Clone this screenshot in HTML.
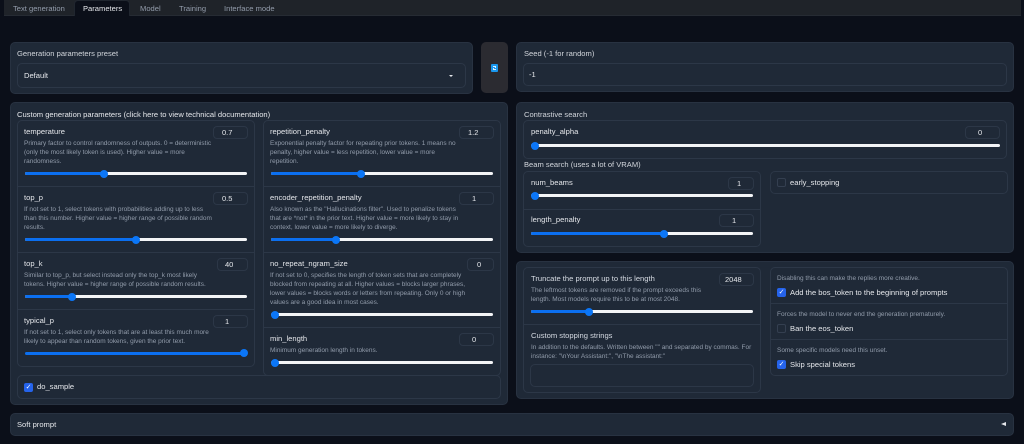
<!DOCTYPE html>
<html><head><meta charset="utf-8"><style>
html{background:#0b0f19}
html,body{margin:0;padding:0;width:1024px;height:444px;overflow:hidden;font-family:"Liberation Sans",sans-serif}
#r{position:absolute;left:0;top:0;width:1024px;height:444px;background:#0b0f19;filter:blur(.35px);overflow:hidden}
#r div{position:absolute;box-sizing:border-box}
#r svg{position:absolute}
#r .p{background:#1f2937;border:1px solid #283241;border-radius:5px}
#r .b{border:1px solid #2c3747;border-radius:5px;background:#1f2937}
#r .t{white-space:nowrap;color:#d1d5db;font-size:7.58px;line-height:9px}
#r .l{white-space:nowrap;color:#e5e7eb;font-size:7.6px;line-height:9px}
#r .d{white-space:nowrap;color:#929cab;font-size:6.48px;line-height:9px;margin-top:1px}
#r .n{border:1px solid #2c3747;border-radius:4px;color:#e5e7eb;font-size:7.5px;line-height:11px;height:13px;white-space:nowrap}
#r .tr{height:3px;background:#f3f4f6;border-radius:2px}
#r .fi{height:3px;background:#0b6ff0;border-radius:2px}
#r .th{width:8px;height:8px;border-radius:50%;background:#0b76f7}
#r .hr{height:1px;background:#2c3747}
#r .ck{width:9px;height:9px;border-radius:2px;background:#2563eb;color:#fff;font-size:7px;line-height:9px;text-align:center}
#r .un{width:9px;height:9px;border-radius:2px;background:#1f2937;border:1px solid #343f50}
</style></head><body><div id="r">
<!-- tabs -->
<div style="left:4px;top:0;width:1017px;height:16px;background:#1f2329;border-bottom:1px solid #262b33"></div>
<div style="left:74px;top:0;width:56px;height:16px;background:#0b0f19;border:1px solid #20262f;border-bottom:none;border-top-left-radius:4px;border-top-right-radius:4px"></div>
<div class="t" style="left:13px;top:4px;color:#939cab">Text generation</div>
<div class="t" style="left:83px;top:4px;color:#e5e7eb">Parameters</div>
<div class="t" style="left:140px;top:4px;color:#939cab">Model</div>
<div class="t" style="left:179px;top:4px;color:#939cab">Training</div>
<div class="t" style="left:224px;top:4px;color:#939cab">Interface mode</div>

<!-- preset -->
<div class="p" style="left:10px;top:42px;width:463px;height:52px"></div>
<div class="t" style="left:17px;top:49px">Generation parameters preset</div>
<div class="b" style="left:17px;top:63px;width:449px;height:25px"></div>
<div class="t" style="left:24px;top:71px;color:#e5e7eb">Default</div>
<div style="left:449px;top:75px;width:0;height:0;border-left:2.5px solid transparent;border-right:2.5px solid transparent;border-top:2.5px solid #e5e7eb"></div>

<!-- refresh -->
<div style="left:481px;top:42px;width:27px;height:51px;background:#2b2b31;border-radius:5px"></div>
<svg style="left:491px;top:64px" width="7" height="8" viewBox="0 0 7 8"><rect width="7" height="8" rx="1" fill="#1a97ee"/><path d="M2 2.5h2.5v1.5M5 5.5H2.5V4" fill="none" stroke="#d8f0ff" stroke-width="1"/></svg>

<!-- seed -->
<div class="p" style="left:516px;top:42px;width:498px;height:50px"></div>
<div class="t" style="left:524px;top:49px">Seed (-1 for random)</div>
<div class="b" style="left:523px;top:63px;width:484px;height:23px"></div>
<div class="t" style="left:529px;top:70px;color:#e5e7eb">-1</div>

<!-- custom params -->
<div class="p" style="left:10px;top:102px;width:498px;height:303px"></div>
<div class="t" style="left:17px;top:110px;color:#e5e7eb">Custom generation parameters (click here to view technical documentation)</div>
<div class="b" style="left:17px;top:120px;width:238px;height:247px"></div>
<div class="b" style="left:263px;top:120px;width:238px;height:256px"></div>
<div class="hr" style="left:18px;top:186px;width:236px"></div>
<div class="hr" style="left:18px;top:252px;width:236px"></div>
<div class="hr" style="left:18px;top:309px;width:236px"></div>
<div class="hr" style="left:264px;top:186px;width:236px"></div>
<div class="hr" style="left:264px;top:252px;width:236px"></div>
<div class="hr" style="left:264px;top:327px;width:236px"></div>

<!-- temperature -->
<div class="l" style="left:24px;top:127px">temperature</div>
<div class="n" style="left:213px;top:126px;width:35px;padding-left:8px">0.7</div>
<div class="d" style="left:24px;top:138px">Primary factor to control randomness of outputs. 0 = deterministic<br>(only the most likely token is used). Higher value = more<br>randomness.</div>
<div class="tr" style="left:25px;top:172px;width:222px"></div><div class="fi" style="left:25px;top:172px;width:78px"></div><div class="th" style="left:100px;top:170px"></div>

<!-- top_p -->
<div class="l" style="left:24px;top:193px">top_p</div>
<div class="n" style="left:213px;top:192px;width:35px;padding-left:8px">0.5</div>
<div class="d" style="left:24px;top:204px">If not set to 1, select tokens with probabilities adding up to less<br>than this number. Higher value = higher range of possible random<br>results.</div>
<div class="tr" style="left:25px;top:238px;width:222px"></div><div class="fi" style="left:25px;top:238px;width:111px"></div><div class="th" style="left:132px;top:236px"></div>

<!-- top_k -->
<div class="l" style="left:24px;top:259px">top_k</div>
<div class="n" style="left:217px;top:258px;width:31px;padding-left:7px">40</div>
<div class="d" style="left:24px;top:270px">Similar to top_p, but select instead only the top_k most likely<br>tokens. Higher value = higher range of possible random results.</div>
<div class="tr" style="left:25px;top:295px;width:222px"></div><div class="fi" style="left:25px;top:295px;width:47px"></div><div class="th" style="left:68px;top:293px"></div>

<!-- typical_p -->
<div class="l" style="left:24px;top:316px">typical_p</div>
<div class="n" style="left:213px;top:315px;width:35px;padding-left:11px">1</div>
<div class="d" style="left:24px;top:327px">If not set to 1, select only tokens that are at least this much more<br>likely to appear than random tokens, given the prior text.</div>
<div class="fi" style="left:25px;top:352px;width:222px"></div><div class="th" style="left:240px;top:349px"></div>

<!-- repetition_penalty -->
<div class="l" style="left:270px;top:127px">repetition_penalty</div>
<div class="n" style="left:459px;top:126px;width:35px;padding-left:8px">1.2</div>
<div class="d" style="left:270px;top:138px">Exponential penalty factor for repeating prior tokens. 1 means no<br>penalty, higher value = less repetition, lower value = more<br>repetition.</div>
<div class="tr" style="left:271px;top:172px;width:222px"></div><div class="fi" style="left:271px;top:172px;width:90px"></div><div class="th" style="left:357px;top:170px"></div>

<!-- encoder -->
<div class="l" style="left:270px;top:193px">encoder_repetition_penalty</div>
<div class="n" style="left:459px;top:192px;width:35px;padding-left:12px">1</div>
<div class="d" style="left:270px;top:204px">Also known as the "Hallucinations filter". Used to penalize tokens<br>that are *not* in the prior text. Higher value = more likely to stay in<br>context, lower value = more likely to diverge.</div>
<div class="tr" style="left:271px;top:238px;width:222px"></div><div class="fi" style="left:271px;top:238px;width:65px"></div><div class="th" style="left:332px;top:236px"></div>

<!-- no_repeat -->
<div class="l" style="left:270px;top:259px">no_repeat_ngram_size</div>
<div class="n" style="left:467px;top:258px;width:27px;padding-left:9px">0</div>
<div class="d" style="left:270px;top:270px">If not set to 0, specifies the length of token sets that are completely<br>blocked from repeating at all. Higher values = blocks larger phrases,<br>lower values = blocks words or letters from repeating. Only 0 or high<br>values are a good idea in most cases.</div>
<div class="tr" style="left:271px;top:313px;width:222px"></div><div class="th" style="left:271px;top:311px"></div>

<!-- min_length -->
<div class="l" style="left:270px;top:334px">min_length</div>
<div class="n" style="left:459px;top:333px;width:35px;padding-left:12px">0</div>
<div class="d" style="left:270px;top:345px">Minimum generation length in tokens.</div>
<div class="tr" style="left:271px;top:361px;width:222px"></div><div class="th" style="left:271px;top:359px"></div>

<!-- do_sample -->
<div class="b" style="left:17px;top:375px;width:484px;height:24px"></div>
<div class="ck" style="left:24px;top:383px">✓</div>
<div class="l" style="left:37px;top:382px">do_sample</div>

<!-- soft prompt -->
<div class="p" style="left:10px;top:413px;width:1004px;height:23px"></div>
<div class="t" style="left:17px;top:420px;color:#e5e7eb">Soft prompt</div>
<div style="left:1001px;top:422px;width:0;height:0;border-top:2.5px solid transparent;border-bottom:2.5px solid transparent;border-right:5px solid #e5e7eb"></div>

<!-- contrastive -->
<div class="p" style="left:516px;top:102px;width:498px;height:151px"></div>
<div class="t" style="left:524px;top:110px">Contrastive search</div>
<div class="b" style="left:523px;top:120px;width:484px;height:39px"></div>
<div class="l" style="left:531px;top:127px">penalty_alpha</div>
<div class="n" style="left:965px;top:126px;width:35px;padding-left:12px">0</div>
<div class="tr" style="left:531px;top:144px;width:469px"></div><div class="th" style="left:531px;top:142px"></div>
<div class="t" style="left:524px;top:160px">Beam search (uses a lot of VRAM)</div>
<div class="b" style="left:523px;top:171px;width:238px;height:76px"></div>
<div class="hr" style="left:524px;top:209px;width:236px"></div>
<div class="l" style="left:531px;top:178px">num_beams</div>
<div class="n" style="left:728px;top:177px;width:26px;padding-left:8px">1</div>
<div class="tr" style="left:531px;top:194px;width:222px"></div><div class="th" style="left:531px;top:192px"></div>
<div class="l" style="left:531px;top:215px">length_penalty</div>
<div class="n" style="left:719px;top:214px;width:35px;padding-left:12px">1</div>
<div class="tr" style="left:531px;top:232px;width:222px"></div><div class="fi" style="left:531px;top:232px;width:133px"></div><div class="th" style="left:660px;top:230px"></div>
<div class="b" style="left:770px;top:171px;width:238px;height:23px"></div>
<div class="un" style="left:777px;top:178px"></div>
<div class="l" style="left:790px;top:178px">early_stopping</div>

<!-- truncate panel -->
<div class="p" style="left:516px;top:261px;width:498px;height:138px"></div>
<div class="b" style="left:523px;top:267px;width:238px;height:126px"></div>
<div class="hr" style="left:524px;top:324px;width:236px"></div>
<div class="l" style="left:531px;top:274px;color:#d6dbe3">Truncate the prompt up to this length</div>
<div class="n" style="left:719px;top:273px;width:35px;padding-left:5px">2048</div>
<div class="d" style="left:531px;top:285px">The leftmost tokens are removed if the prompt exceeds this<br>length. Most models require this to be at most 2048.</div>
<div class="tr" style="left:531px;top:310px;width:222px"></div><div class="fi" style="left:531px;top:310px;width:58px"></div><div class="th" style="left:585px;top:308px"></div>
<div class="l" style="left:531px;top:331px;color:#d6dbe3">Custom stopping strings</div>
<div class="d" style="left:531px;top:342px">In addition to the defaults. Written between "" and separated by commas. For<br>instance: "\nYour Assistant:", "\nThe assistant:"</div>
<div class="b" style="left:530px;top:364px;width:224px;height:23px"></div>

<div class="b" style="left:770px;top:267px;width:238px;height:109px"></div>
<div class="hr" style="left:771px;top:303px;width:236px"></div>
<div class="hr" style="left:771px;top:339px;width:236px"></div>
<div class="d" style="left:777px;top:273px">Disabling this can make the replies more creative.</div>
<div class="ck" style="left:777px;top:288px">✓</div>
<div class="l" style="left:790px;top:288px">Add the bos_token to the beginning of prompts</div>
<div class="d" style="left:777px;top:309px">Forces the model to never end the generation prematurely.</div>
<div class="un" style="left:777px;top:324px"></div>
<div class="l" style="left:790px;top:324px">Ban the eos_token</div>
<div class="d" style="left:777px;top:345px">Some specific models need this unset.</div>
<div class="ck" style="left:777px;top:360px">✓</div>
<div class="l" style="left:790px;top:360px">Skip special tokens</div>
</div></body></html>
